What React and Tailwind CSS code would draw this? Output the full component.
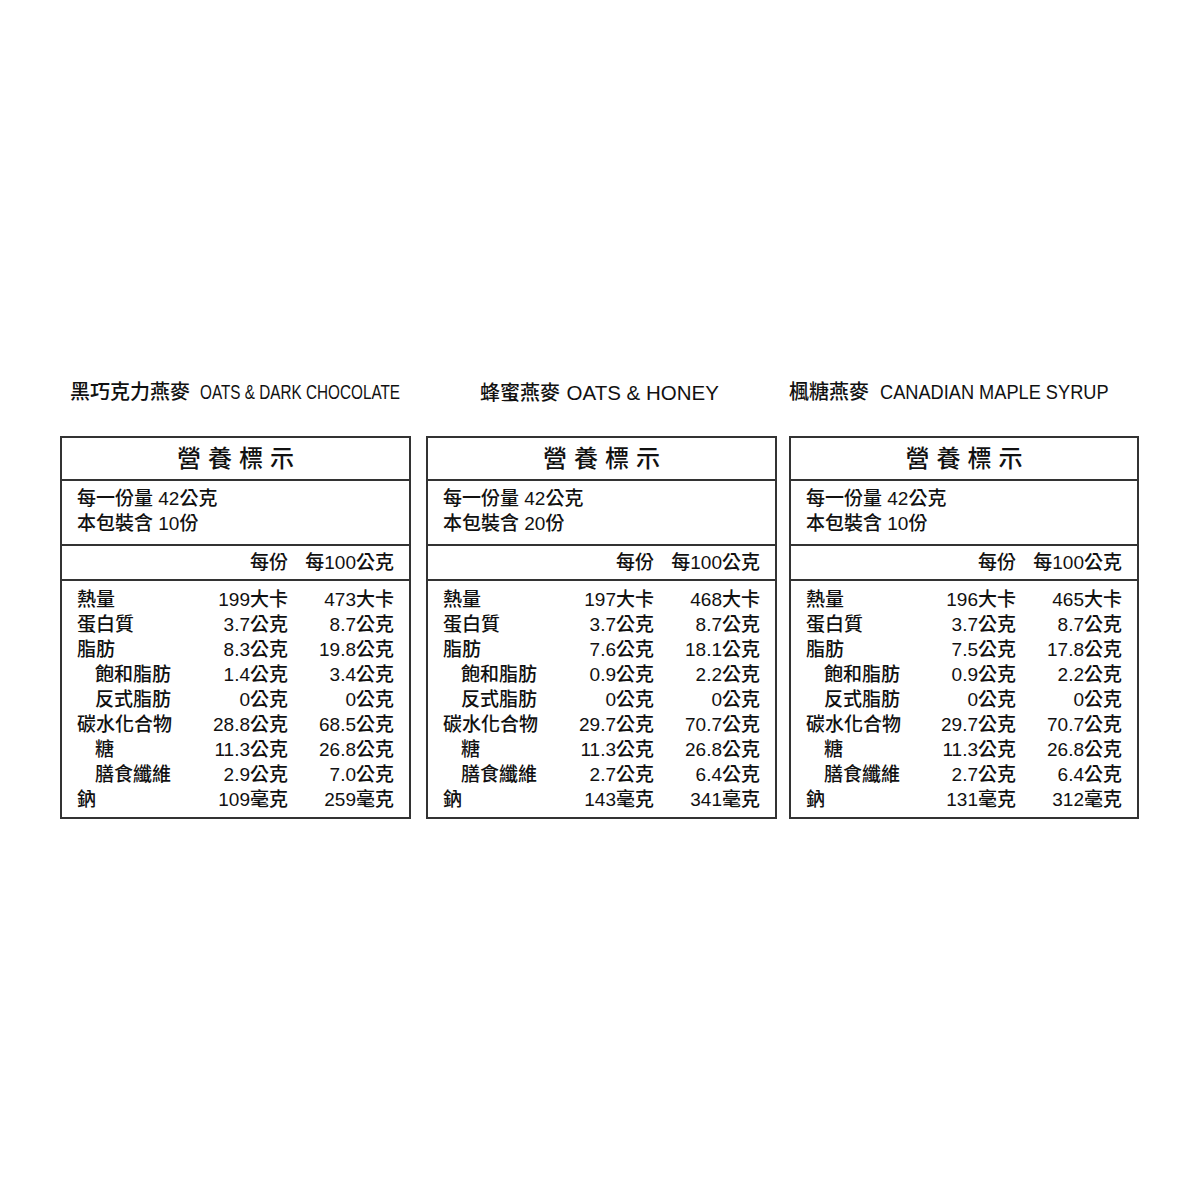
const labels = [
  {
    zh: "黑巧克力燕麥",
    en: "OATS & DARK CHOCOLATE",
    enClass: "inline-block ml-[4px] origin-left scale-x-[0.765]",
    titlePad: "pl-[10px]",
    boxClass: "w-[351px]",
    servings: "10份",
    rows: [
      ["199大卡", "473大卡"],
      ["3.7公克", "8.7公克"],
      ["8.3公克", "19.8公克"],
      ["1.4公克", "3.4公克"],
      ["0公克", "0公克"],
      ["28.8公克", "68.5公克"],
      ["11.3公克", "26.8公克"],
      ["2.9公克", "7.0公克"],
      ["109毫克", "259毫克"],
    ],
  },
  {
    zh: "蜂蜜燕麥",
    en: "OATS & HONEY",
    enClass: "inline-block ml-[1px] text-[20.5px]",
    titlePad: "pl-[54px]",
    boxClass: "w-[351px] ml-[15px]",
    servings: "20份",
    rows: [
      ["197大卡", "468大卡"],
      ["3.7公克", "8.7公克"],
      ["7.6公克", "18.1公克"],
      ["0.9公克", "2.2公克"],
      ["0公克", "0公克"],
      ["29.7公克", "70.7公克"],
      ["11.3公克", "26.8公克"],
      ["2.7公克", "6.4公克"],
      ["143毫克", "341毫克"],
    ],
  },
  {
    zh: "楓糖燕麥",
    en: "CANADIAN MAPLE SYRUP",
    enClass: "inline-block ml-[5px] origin-left scale-x-[0.91]",
    titlePad: "pl-0",
    boxClass: "w-[350px] ml-[12px]",
    servings: "10份",
    rows: [
      ["196大卡", "465大卡"],
      ["3.7公克", "8.7公克"],
      ["7.5公克", "17.8公克"],
      ["0.9公克", "2.2公克"],
      ["0公克", "0公克"],
      ["29.7公克", "70.7公克"],
      ["11.3公克", "26.8公克"],
      ["2.7公克", "6.4公克"],
      ["131毫克", "312毫克"],
    ],
  },
];

// nutrient names, second value = indented
const names = [
  ["熱量", false],
  ["蛋白質", false],
  ["脂肪", false],
  ["飽和脂肪", true],
  ["反式脂肪", true],
  ["碳水化合物", false],
  ["糖", true],
  ["膳食纖維", true],
  ["鈉", false],
];

const NutritionBox = ({ label }) => {
  return (
    <div className={"flex flex-col " + label.boxClass}>
      <div className={"h-[25px] leading-[25px] text-[20px] whitespace-nowrap " + label.titlePad}>
        {label.zh} <span className={label.enClass}>{label.en}</span>
      </div>
      <div className="mt-[31px] border-2 border-[#333]">
        <div className="h-[43px] border-b-2 border-[#333] flex items-center justify-center text-[24px] tracking-[7px] pl-[7px]">
          營養標示
        </div>
        <div className="border-b-2 border-[#333] pl-[15px] pt-[5px] pb-[8px] text-[19px] leading-[25px]">
          <div>每一份量 42公克</div>
          <div>本包裝含 {label.servings}</div>
        </div>
        <div className="h-[35px] border-b-2 border-[#333] px-[15px] grid grid-cols-[1fr_91px_106px] items-center text-[19px] leading-[25px]">
          <div></div>
          <div className="text-right">每份</div>
          <div className="text-right">每100公克</div>
        </div>
        <div className="px-[15px] pt-[6px] pb-[5px] text-[19px] leading-[25px]">
          {names.map(([name, indent], i) => (
            <div key={name} className="grid grid-cols-[1fr_91px_106px]">
              <div className={indent ? "pl-[18px]" : ""}>{name}</div>
              <div className="text-right">{label.rows[i][0]}</div>
              <div className="text-right">{label.rows[i][1]}</div>
            </div>
          ))}
        </div>
      </div>
    </div>
  );
};

export default function App() {
  return (
    <div
      className="min-h-[1200px] bg-white text-[#111] font-medium pt-[380px] pl-[60px] flex items-start"
      style={{ fontFamily: "'Liberation Sans', 'Noto Sans CJK TC', sans-serif" }}
    >
      {labels.map((label) => (
        <NutritionBox key={label.zh} label={label} />
      ))}
    </div>
  );
}
